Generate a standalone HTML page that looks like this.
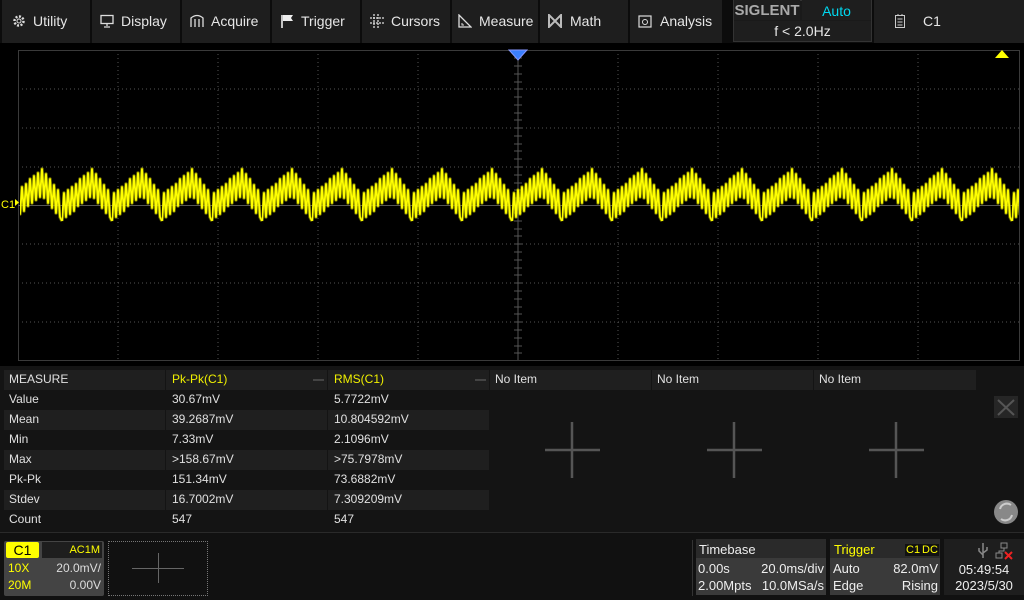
<!DOCTYPE html>
<html><head><meta charset="utf-8"><style>
*{margin:0;padding:0;box-sizing:border-box}
body{width:1024px;height:600px;background:#000;overflow:hidden;font-family:"Liberation Sans",sans-serif;color:#ddd;position:relative;font-size:13px}
.top{position:absolute;left:0;top:0;width:1024px;height:43px;background:#0c0c0c}
.btn{position:absolute;top:0;height:43px;background:#1e1e1e;color:#e6e6e6;font-size:14px;line-height:43px;padding-left:10px;white-space:nowrap}
.btn svg{position:absolute;top:14px}
.abs{position:absolute;white-space:nowrap}
.mp{position:absolute;left:0;top:366px;width:1024px;height:166px;background:#141414}
.row{position:absolute;left:5px;height:19px;line-height:19px;font-size:12px;color:#e0e0e0;white-space:nowrap}
.row span{white-space:nowrap}
.y{color:#f0f000}
</style></head><body>
<div class="top">
 <div class="btn" style="left:2px;width:88px"><svg style="left:10px" width="14" height="14" viewBox="0 0 14 14"><circle cx="7" cy="7" r="4.5" fill="none" stroke="#ddd" stroke-width="2.5" stroke-dasharray="2 1.5"/><circle cx="7" cy="7" r="2" fill="none" stroke="#ddd"/></svg><span style="margin-left:21px">Utility</span></div>
 <div class="btn" style="left:92px;width:88px"><svg style="left:8px" width="14" height="14" viewBox="0 0 14 14"><rect x="1" y="1.5" width="12" height="8" fill="none" stroke="#ddd" stroke-width="1.3"/><path d="M7 10v2M4 13h6" stroke="#ddd" stroke-width="1.3"/></svg><span style="margin-left:19px">Display</span></div>
 <div class="btn" style="left:182px;width:88px"><svg style="left:8px" width="14" height="14" viewBox="0 0 14 14"><path d="M1 13V4Q7 -1 13 4V13M5 13V5M9 13V5" fill="none" stroke="#ddd" stroke-width="1.3"/></svg><span style="margin-left:19px">Acquire</span></div>
 <div class="btn" style="left:272px;width:88px"><svg style="left:8px" width="14" height="14" viewBox="0 0 14 14"><path d="M2 1v13" stroke="#eee" stroke-width="1.6"/><path d="M3 1h10l-2 3 2 3H3z" fill="#eee"/></svg><span style="margin-left:19px">Trigger</span></div>
 <div class="btn" style="left:362px;width:88px"><svg style="left:8px" width="14" height="14" viewBox="0 0 14 14"><path d="M4 0v14M8 0v14M0 4h14M0 9h14" stroke="#ddd" stroke-width="1.3" stroke-dasharray="2 1"/></svg><span style="margin-left:19px">Cursors</span></div>
 <div class="btn" style="left:452px;width:86px"><svg style="left:6px" width="14" height="14" viewBox="0 0 14 14"><path d="M1 1v12h12z" fill="none" stroke="#ddd" stroke-width="1.3"/><path d="M4 9v2h2" fill="none" stroke="#ddd"/></svg><span style="margin-left:17px">Measure</span></div>
 <div class="btn" style="left:540px;width:88px"><svg style="left:8px" width="14" height="14" viewBox="0 0 14 14"><path d="M1 1l6 6 6-6v12l-6-6-6 6z" fill="none" stroke="#bbb" stroke-width="2"/></svg><span style="margin-left:20px">Math</span></div>
 <div class="btn" style="left:630px;width:92px"><svg style="left:8px" width="14" height="14" viewBox="0 0 14 14"><rect x="1" y="2" width="12" height="11" fill="none" stroke="#ddd" stroke-width="1.2"/><circle cx="7" cy="8" r="2.5" fill="none" stroke="#ddd"/></svg><span style="margin-left:20px">Analysis</span></div>
 <div class="abs" style="left:733px;top:0;width:139px;height:42px;background:#1a1a1a;border:1px solid #333"></div>
 <div class="abs" style="left:734px;top:0;width:66px;height:20px;background:#1e1e1e;color:#aaa;font-weight:bold;font-size:15px;line-height:21px;text-align:center">SIGLENT</div>
 <div class="abs" style="left:802px;top:0;width:69px;height:20px;background:#1e1e1e;color:#00d8f0;font-size:14px;line-height:22px;text-align:center">Auto</div>
 <div class="abs" style="left:734px;top:21px;width:137px;height:20px;background:#1e1e1e;color:#e6e6e6;font-size:14px;line-height:20px;text-align:center">f &lt; 2.0Hz</div>
 <div class="btn" style="left:874px;width:150px"><svg style="left:20px" width="12" height="14" viewBox="0 0 12 14"><rect x="1.5" y="1.5" width="9" height="12" fill="none" stroke="#ccc"/><path d="M4 0v2M8 0v2M3.5 5h5M3.5 8h5M3.5 11h5" stroke="#ccc"/></svg><span style="margin-left:39px">C1</span></div>
</div>

<svg class="abs" style="left:0;top:43px" width="1024" height="323" viewBox="0 43 1024 323">
 <defs>
  <pattern id="w" patternUnits="userSpaceOnUse" x="12" y="165" width="50" height="60">
   <g transform="translate(0,30)" fill="none" stroke-linejoin="round">
   <polyline stroke="#aaaa00" stroke-opacity="0.6" stroke-width="3.5" points="0,26 2,-2 4,22 6,-5 8,19 10,-8 12,16 14,-11 16,11 18,-16 20,8 22,-19 24,5 26,-22 28,2 30,-26 32,3 34,-21 36,8 38,-16 40,13 42,-10 44,18 46,-5 48,22 50,26"/>
   <polyline stroke="#ffff00" stroke-width="1.8" points="0,26 2,-2 4,22 6,-5 8,19 10,-8 12,16 14,-11 16,11 18,-16 20,8 22,-19 24,5 26,-22 28,2 30,-26 32,3 34,-21 36,8 38,-16 40,13 42,-10 44,18 46,-5 48,22 50,26"/>
   </g>
  </pattern>
 </defs>
 <g stroke="#555" stroke-width="1" stroke-dasharray="1 3">
  <path d="M118 50V360M218 50V360M318 50V360M418 50V360M618 50V360M718 50V360M818 50V360M918 50V360"/>
  <path d="M18 89H1019M18 128H1019M18 167H1019M18 244H1019M18 283H1019M18 322H1019"/>
 </g>
 <rect x="18.5" y="50.5" width="1001" height="310" fill="none" stroke="#3a3a3a"/>
 <path d="M518 50V360M18 205.5H1019" stroke="#555"/>
 <path d="M514 58H522M514 66H522M514 74H522M514 82H522M514 89H522M514 97H522M514 105H522M514 113H522M514 120H522M514 128H522M514 136H522M514 144H522M514 151H522M514 159H522M514 167H522M514 175H522M514 183H522M514 190H522M514 198H522M514 213H522M514 221H522M514 229H522M514 236H522M514 244H522M514 252H522M514 260H522M514 268H522M514 275H522M514 283H522M514 291H522M514 299H522M514 307H522M514 314H522M514 322H522M514 330H522M514 338H522M514 346H522M514 353H522" stroke="#555"/>
 <rect x="20" y="165" width="999" height="60" fill="url(#w)"/>
 <path d="M509 50h18l-9 10z" fill="#3a7fff" stroke="#8899ff"/>
 <path d="M995 58h14l-7-8z" fill="#ffff00"/>
 <text x="1" y="208" fill="#ffff00" font-size="11" font-family="Liberation Sans">C1</text>
 <path d="M15 199v7l4-3.5z" fill="#ffff00"/>
</svg>

<div class="mp">
 <div class="abs" style="left:4px;top:4px;width:972px;height:20px;background:#1f1f1f"></div>
 <div class="row" style="top:4px;width:480px"><span style="position:absolute;left:4px">MEASURE</span><span class="y" style="position:absolute;left:167px">Pk-Pk(C1)</span><span class="y" style="position:absolute;left:329px">RMS(C1)</span>
  <span style="position:absolute;left:308px;top:9px;width:11px;height:2px;background:#444"></span><span style="position:absolute;left:470px;top:9px;width:11px;height:2px;background:#444"></span></div>
 <div class="abs" style="left:165px;top:4px;width:1px;height:160px;background:#141414"></div>
 <div class="abs" style="left:327px;top:4px;width:1px;height:160px;background:#141414"></div>
 <div class="abs" style="left:489px;top:4px;width:1px;height:20px;background:#141414"></div>
 <div class="abs" style="left:651px;top:4px;width:1px;height:20px;background:#141414"></div>
 <div class="abs" style="left:813px;top:4px;width:1px;height:20px;background:#141414"></div>
 <div class="row" style="top:4px;left:495px">No Item</div>
 <div class="row" style="top:4px;left:657px">No Item</div>
 <div class="row" style="top:4px;left:819px">No Item</div>
 <div class="abs" style="left:4px;top:44px;width:485px;height:20px;background:#1f1f1f"></div>
 <div class="abs" style="left:4px;top:84px;width:485px;height:20px;background:#1f1f1f"></div>
 <div class="abs" style="left:4px;top:124px;width:485px;height:20px;background:#1f1f1f"></div>
 <div class="abs" style="left:4px;top:24px;width:485px;height:140px;background:repeating-linear-gradient(90deg,transparent 0 161px,#141414 161px 162px)"></div>
 <div class="row" style="top:24px"><span style="position:absolute;left:4px">Value</span><span style="position:absolute;left:167px">30.67mV</span><span style="position:absolute;left:329px">5.7722mV</span></div>
 <div class="row" style="top:44px"><span style="position:absolute;left:4px">Mean</span><span style="position:absolute;left:167px">39.2687mV</span><span style="position:absolute;left:329px">10.804592mV</span></div>
 <div class="row" style="top:64px"><span style="position:absolute;left:4px">Min</span><span style="position:absolute;left:167px">7.33mV</span><span style="position:absolute;left:329px">2.1096mV</span></div>
 <div class="row" style="top:84px"><span style="position:absolute;left:4px">Max</span><span style="position:absolute;left:167px">&gt;158.67mV</span><span style="position:absolute;left:329px">&gt;75.7978mV</span></div>
 <div class="row" style="top:104px"><span style="position:absolute;left:4px">Pk-Pk</span><span style="position:absolute;left:167px">151.34mV</span><span style="position:absolute;left:329px">73.6882mV</span></div>
 <div class="row" style="top:124px"><span style="position:absolute;left:4px">Stdev</span><span style="position:absolute;left:167px">16.7002mV</span><span style="position:absolute;left:329px">7.309209mV</span></div>
 <div class="row" style="top:144px"><span style="position:absolute;left:4px">Count</span><span style="position:absolute;left:167px">547</span><span style="position:absolute;left:329px">547</span></div>
 <svg class="abs" style="left:490px;top:24px" width="534" height="140">
  <path d="M55 60h55M82 32v56M217 60h55M244 32v56M379 60h55M406 32v56" stroke="#555" stroke-width="2.5"/>
  <rect x="504" y="6" width="24" height="22" fill="#262626"/>
  <path d="M508 10l16 15M524 10l-16 15" stroke="#555" stroke-width="2"/>
  <circle cx="516" cy="122" r="12" fill="#888"/>
  <path d="M510 119a7 7 0 0 1 11-4M522 125a7 7 0 0 1-11 4" fill="none" stroke="#ccc" stroke-width="2"/>
 </svg>
</div>
<div class="abs" style="left:0;top:532px;width:1024px;height:68px;background:#111;border-top:1px solid #2a2a2a"></div>
<div class="abs" style="left:4px;top:541px;width:100px;height:55px;background:#444;border-radius:2px"></div>
<div class="abs" style="left:6px;top:542px;width:33px;height:16px;background:#ffff00;color:#000;font-size:14px;line-height:16px;text-align:center;border-radius:2px">C1</div>
<div class="abs" style="left:42px;top:542px;width:60px;height:16px;background:#1e1e1e;color:#ffff00;font-size:11px;line-height:16px;text-align:right;padding-right:2px">AC1M</div>
<div class="abs" style="left:8px;top:561px;color:#ffff00;font-size:12px">10X</div>
<div class="abs" style="left:8px;top:578px;color:#ffff00;font-size:12px">20M</div>
<div class="abs" style="left:50px;top:561px;width:51px;text-align:right;color:#ddd;font-size:12px">20.0mV/</div>
<div class="abs" style="left:50px;top:578px;width:51px;text-align:right;color:#ddd;font-size:12px">0.00V</div>
<div class="abs" style="left:108px;top:541px;width:100px;height:55px;border:1px dotted #777"></div>
<div class="abs" style="left:132px;top:568px;width:52px;height:1px;background:#666"></div>
<div class="abs" style="left:158px;top:553px;width:1px;height:30px;background:#666"></div>
<div class="abs" style="left:692px;top:540px;width:1px;height:56px;background:#333"></div>
<div class="abs" style="left:696px;top:539px;width:130px;height:56px;background:#2a2a2a"></div>
<div class="abs" style="left:696px;top:558px;width:130px;height:37px;background:#3a3a3a"></div>
<div class="abs" style="left:699px;top:542px;color:#eee;font-size:13px">Timebase</div>
<div class="abs" style="left:698px;top:561px;color:#eee;font-size:13px">0.00s</div>
<div class="abs" style="left:698px;top:578px;color:#eee;font-size:13px">2.00Mpts</div>
<div class="abs" style="left:740px;top:561px;width:84px;text-align:right;color:#eee;font-size:13px">20.0ms/div</div>
<div class="abs" style="left:740px;top:578px;width:84px;text-align:right;color:#eee;font-size:13px">10.0MSa/s</div>
<div class="abs" style="left:830px;top:539px;width:110px;height:56px;background:#2a2a2a"></div>
<div class="abs" style="left:830px;top:558px;width:110px;height:37px;background:#3a3a3a"></div>
<div class="abs" style="left:834px;top:542px;color:#ffff00;font-size:13px">Trigger</div>
<div class="abs" style="left:905px;top:544px;color:#ffff00;font-size:11px;background:#111;padding:0 1px">C1</div>
<div class="abs" style="left:921px;top:544px;color:#ffff00;font-size:11px;background:#111;padding:0 1px">DC</div>
<div class="abs" style="left:833px;top:561px;color:#eee;font-size:13px">Auto</div>
<div class="abs" style="left:833px;top:578px;color:#eee;font-size:13px">Edge</div>
<div class="abs" style="left:860px;top:561px;width:78px;text-align:right;color:#eee;font-size:13px">82.0mV</div>
<div class="abs" style="left:860px;top:578px;width:78px;text-align:right;color:#eee;font-size:13px">Rising</div>
<div class="abs" style="left:944px;top:539px;width:80px;height:56px;background:#1e1e1e"></div>
<svg class="abs" style="left:975px;top:541px" width="45" height="20"><path d="M8 2v15M8 14l-4-4v-3M8 12l4-3v-3" stroke="#888" fill="none" stroke-width="1.5"/><rect x="26" y="2" width="6" height="5" fill="none" stroke="#888"/><rect x="21" y="12" width="6" height="5" fill="none" stroke="#888"/><path d="M29 7v3h-5v2" stroke="#888" fill="none"/><path d="M30 11l7 7M37 11l-7 7" stroke="#e22" stroke-width="2"/></svg>
<div class="abs" style="left:944px;top:562px;width:80px;text-align:center;color:#eee;font-size:13px">05:49:54</div>
<div class="abs" style="left:944px;top:578px;width:80px;text-align:center;color:#eee;font-size:13px">2023/5/30</div>
</body></html>
